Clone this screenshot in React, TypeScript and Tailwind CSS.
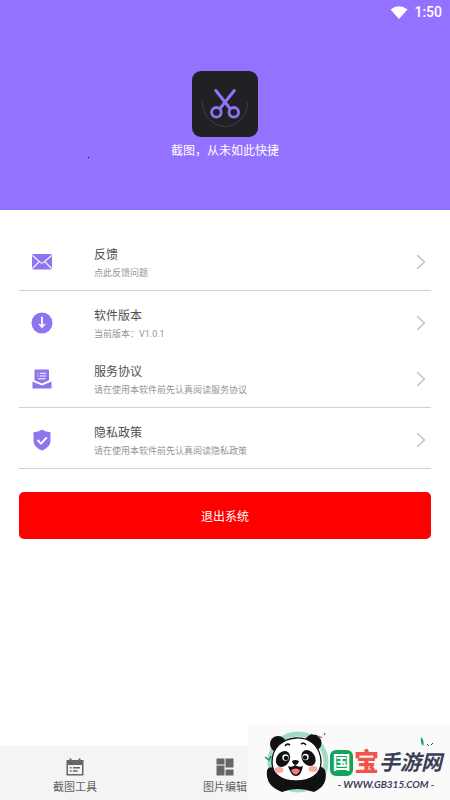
import React from "react";

interface MenuItem {
  title: string;
  desc: string;
  icon: React.ReactNode;
  divider: boolean;
}

function MailIcon() {
  return (
    <svg viewBox="0 0 20 16" className="w-5 h-4" aria-hidden="true">
      <rect width="20" height="15.5" rx="1.5" fill="#8f74f0" />
      <path d="M0.5 1.5 L8.3 8.3 Q10 9.7 11.7 8.3 L19.5 1.5 M0.5 14.5 L7.2 7.6 M19.5 14.5 L12.8 7.6" fill="none" stroke="#fff" strokeWidth="1.1" />
    </svg>
  );
}

function DownloadIcon() {
  return (
    <svg viewBox="0 0 22 22" className="w-[22px] h-[22px]" aria-hidden="true">
      <circle cx="11" cy="11" r="10.5" fill="#8f74f0" />
      <path d="M11 5.5 V13" stroke="#fff" strokeWidth="1.8" strokeLinecap="round" />
      <path d="M7 11.5 L11 16.5 L15 11.5 L11 12.8 Z" fill="#fff" />
    </svg>
  );
}

function AgreementIcon() {
  return (
    <svg viewBox="0 0 20 20" className="w-5 h-5" aria-hidden="true">
      <path d="M3.5 0.5 H16 Q17 0.5 17 1.5 V11.2 L10 14.5 L2.5 11.2 V1.5 Q2.5 0.5 3.5 0.5 Z" fill="#8f74f0" />
      <path d="M0.5 12.5 L10 16.5 L19.5 12.5 V19.5 H0.5 Z" fill="#8f74f0" />
      <path d="M0.5 11.6 L10 15.6 L19.5 11.6" fill="none" stroke="#fff" strokeWidth="1" />
      <path d="M5.5 4.3 H6.7 M8 4.3 H14 M5.5 7 H6.7 M8 7 H14 M6 9.8 H13.5" stroke="#fff" strokeWidth="1" />
    </svg>
  );
}

function ShieldIcon() {
  return (
    <svg viewBox="0 0 18 22" className="w-[18px] h-[22px]" aria-hidden="true">
      <path d="M9 0.5 Q12.5 3 17.5 3.2 V12 Q17.5 18 9 21.5 Q0.5 18 0.5 12 V3.2 Q5.5 3 9 0.5 Z" fill="#8f74f0" />
      <path d="M4.5 11 L8 14.6 L13.8 8.3" fill="none" stroke="#fff" strokeWidth="1.9" />
    </svg>
  );
}

function ChevronIcon() {
  return (
    <svg viewBox="0 0 10 16" className="w-[10px] h-4" aria-hidden="true">
      <path d="M1.2 1.2 L8.4 8 L1.2 14.8" fill="none" stroke="#c8c8c8" strokeWidth="1.7" />
    </svg>
  );
}

function AppLogo() {
  return (
    <svg viewBox="0 0 66 66" className="w-[66px] h-[66px]" aria-hidden="true">
      <rect width="66" height="66" rx="9" fill="#202125" />
      <path d="M10.5 31 A22.5 24.5 0 0 0 55.5 31" fill="none" stroke="#4c4c4e" strokeWidth="0.7" />
      <g fill="none" stroke="#9272f5" strokeLinecap="round">
        <path d="M23.8 19.5 L38 37.5" strokeWidth="3" />
        <path d="M42.3 19.5 L28 37.5" strokeWidth="3" />
        <circle cx="24.4" cy="41.3" r="4.8" strokeWidth="2.8" />
        <circle cx="41.8" cy="41.3" r="4.8" strokeWidth="2.8" />
      </g>
    </svg>
  );
}

function CalendarIcon() {
  return (
    <svg viewBox="0 0 18 18" className="w-[18px] h-[18px]" aria-hidden="true">
      <path d="M3.5 0.5 H5.5 V2 H12.5 V0.5 H14.5 V2 H17.5 V17.5 H0.5 V2 H3.5 Z" fill="#666" />
      <rect x="2" y="7" width="14" height="9" fill="#f4f4f4" />
      <path d="M3.8 9.7 H5.5 M7 9.7 H14 M3.8 13 H5.5 M7 13 H11.5" stroke="#666" strokeWidth="1.6" />
    </svg>
  );
}

function BlocksIcon() {
  return (
    <svg viewBox="0 0 18 18" className="w-[18px] h-[18px]" fill="#666" aria-hidden="true">
      <rect x="0.5" y="0.5" width="8" height="6" />
      <rect x="9.5" y="0.5" width="8" height="9" />
      <rect x="0.5" y="7.5" width="8" height="10" />
      <rect x="9.5" y="11.5" width="8" height="6" />
    </svg>
  );
}

function Panda() {
  return (
    <svg viewBox="0 0 66 62" className="w-[66px] h-[62px] shrink-0" aria-hidden="true">
      {/* Mint ring behind the head */}
      <circle cx="34" cy="31" r="28" fill="#fafafa" stroke="#9fdcc2" strokeWidth="5" />
      <path d="M47 3 L52 9 L53 4 M1 26 L5 29 L7 25" fill="none" stroke="#2c8f64" strokeWidth="1.5" />
      <path d="M55 5 L58 7 M60 4 L61 2" stroke="#444" strokeWidth="1" />
      {/* Body and paws */}
      <path d="M3 39 Q6 34 10 38 L17 47 Q33 52 47 45 L51 38 Q57 33 61 39 Q65 54 50 61 Q33 55 18 61 Q1 55 3 39 Z" fill="#111" />
      <ellipse cx="14" cy="13" rx="8" ry="8" fill="#111" />
      <ellipse cx="49" cy="12" rx="8.5" ry="8.5" fill="#111" />
      <path d="M32 7 C47 6 57 17 57 31 C57 44 46 50 32 50 C18 50 8 44 8 31 C8 17 18 8 32 7 Z" fill="#fff" stroke="#111" strokeWidth="1.3" />
      <ellipse cx="19" cy="28" rx="6.5" ry="8.5" transform="rotate(32 19 28)" fill="#111" />
      <ellipse cx="44.5" cy="27" rx="6.5" ry="8.5" transform="rotate(-32 44.5 27)" fill="#111" />
      <circle cx="21.5" cy="26.5" r="3.2" fill="#fff" />
      <circle cx="41.5" cy="26" r="3.2" fill="#fff" />
      <circle cx="22" cy="27" r="2.3" fill="#111" />
      <circle cx="41" cy="26.5" r="2.3" fill="#111" />
      <path d="M21 15 Q23 12 26 14 M37 13 Q40 11 42 14" fill="none" stroke="#111" strokeWidth="1.6" />
      <path d="M28 30 Q31 28 35 30 Q34 34 31 34 Q29 34 28 30 Z" fill="#111" />
      <path d="M24 35 Q28 37 31 34 Q35 37 39 35 Q37 45 32 45 Q27 45 24 35 Z" fill="#111" />
      <path d="M27 39 Q32 36 36 39 Q34 43.5 32 43.5 Q29 43.5 27 39 Z" fill="#f37d76" />
      <ellipse cx="15" cy="39" rx="4.5" ry="3" fill="#f8aaa0" />
      <ellipse cx="49" cy="38" rx="4.5" ry="3" fill="#f8aaa0" />
    </svg>
  );
}

const menuItems: MenuItem[] = [
  { title: "反馈", desc: "点此反馈问题", icon: <MailIcon />, divider: true },
  { title: "软件版本", desc: "当前版本：V1.0.1", icon: <DownloadIcon />, divider: false },
  { title: "服务协议", desc: "请在使用本软件前先认真阅读服务协议", icon: <AgreementIcon />, divider: true },
  { title: "隐私政策", desc: "请在使用本软件前先认真阅读隐私政策", icon: <ShieldIcon />, divider: true },
];

const tabs = [
  { label: "截图工具", icon: <CalendarIcon /> },
  { label: "图片编辑", icon: <BlocksIcon /> },
];

function MenuRow({ item }: { item: MenuItem }) {
  return (
    <li className={item.divider ? "border-b border-[#d0d0d0] mb-1" : ""}>
      <button type="button" className="flex w-full h-14 items-center pl-3 pr-[5px] text-left">
        <span className="flex w-[22px] justify-center">{item.icon}</span>
        <span className="flex flex-1 flex-col pl-[41px] pt-1">
          <span className="text-[12px] leading-[18px] text-[#505050]">{item.title}</span>
          <span className="text-[9px] leading-[18px] text-[#949494]">{item.desc}</span>
        </span>
        <ChevronIcon />
      </button>
    </li>
  );
}

export default function App() {
  return (
    <div className="relative flex min-h-screen flex-col bg-white font-['Roboto','Noto_Sans_CJK_SC',sans-serif]">
      <header className="relative h-[210px] bg-[#9272ff] text-white">
        {/* Status bar */}
        <div className="flex h-6 items-center justify-end gap-[6px] pr-2">
          <svg viewBox="0 0 18 13" className="w-[18px] h-[13px]" aria-hidden="true">
            <path d="M0.5 3.5 Q9 -3 17.5 3.5 L9 13 Z" fill="#fff" />
          </svg>
          <span className="text-[14px] leading-6 font-medium">1:50</span>
        </div>
        <div className="flex flex-col items-center pt-[47px]">
          <AppLogo />
          <h1 className="pt-[5px] text-[12px] leading-[18px]">截图，从未如此快捷</h1>
        </div>
        <span className="absolute left-[88px] top-[157px] size-px bg-black" />
      </header>

      <main className="flex-1 px-[19px] pt-6">
        <ul>
          {menuItems.map((item) => (
            <MenuRow key={item.title} item={item} />
          ))}
        </ul>
        <button type="button" className="mt-[19px] h-[47px] w-full rounded-[5px] bg-[#ff0000] pt-[2px] text-[12px] text-white">
          退出系统
        </button>
      </main>

      <nav className="grid h-[54px] grid-cols-3 bg-[#f4f4f4]">
        {tabs.map((tab) => (
          <button key={tab.label} type="button" className="flex flex-col items-center gap-1 pt-3 text-[11px] leading-[16px] text-[#606060]">
            {tab.icon}
            {tab.label}
          </button>
        ))}
      </nav>

      {/* Site badge, sits over the tab bar */}
      <aside className="absolute right-0 bottom-0 flex h-[76px] w-[202px] items-center bg-[#fafafa] pl-4">
        <Panda />
        <div className="relative flex flex-col items-center pt-4">
          <p className="flex items-center whitespace-nowrap text-[21px] leading-[28px] font-bold italic text-[#3c4056]">
            <span className="mr-px flex h-[26px] w-[23px] items-center justify-center rounded-[6px] bg-[#13a45c] text-[18px] leading-[22px] not-italic text-white">
              国
            </span>
            <span className="text-[25px] font-black not-italic text-[#f4534c]">宝</span>
            手游网
          </p>
          <p className="text-[10px] leading-[14px] font-bold italic text-[#3c4056] font-['Lato',sans-serif]">- WWW.GB315.COM -</p>
          <svg viewBox="0 0 14 10" className="absolute right-2 top-1 w-[14px] h-[10px]" aria-hidden="true">
            <path d="M1 0 Q5 4 3 9 Q0 5 1 0" fill="#13a45c" />
            <path d="M7 7 L9 9 M11 8 L13 6" stroke="#444" strokeWidth="1" />
          </svg>
        </div>
      </aside>
    </div>
  );
}
